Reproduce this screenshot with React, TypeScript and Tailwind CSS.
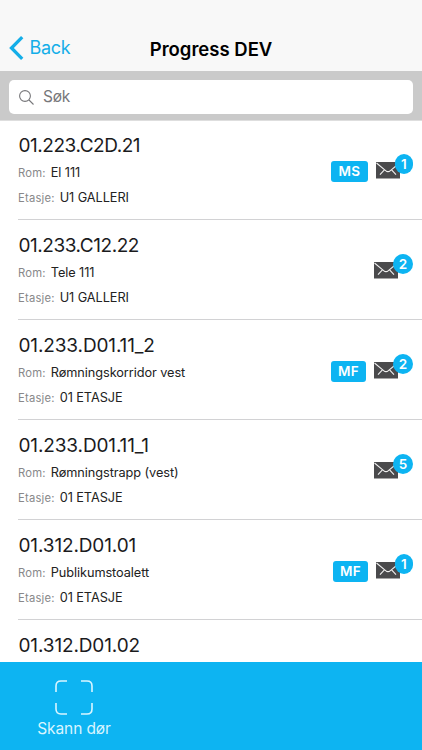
import { ChangeEvent, useState } from "react";

type Door = {
    id: string;
    room: string;
    floor: string;
    tag?: string;
    messages?: number;
};

const doors: Door[] = [
    { id: "01.223.C2D.21", room: "El 111", floor: "U1 GALLERI", tag: "MS", messages: 1 },
    { id: "01.233.C12.22", room: "Tele 111", floor: "U1 GALLERI", messages: 2 },
    { id: "01.233.D01.11_2", room: "Rømningskorridor vest", floor: "01 ETASJE", tag: "MF", messages: 2 },
    { id: "01.233.D01.11_1", room: "Rømningstrapp (vest)", floor: "01 ETASJE", messages: 5 },
    { id: "01.312.D01.01", room: "Publikumstoalett", floor: "01 ETASJE", tag: "MF", messages: 1 },
    { id: "01.312.D01.02", room: "", floor: "" },
];

function MessageIcon({ count }: { count: number }) {
    return (
        <div className={count === 1 ? "relative h-[18px] w-[37px]" : "relative h-[18px] w-[39px]"}>
            <svg width="24" height="17" viewBox="0 0 24 17" fill="none">
                <rect width="24" height="16.5" fill="#4a4a4c" />
                <path
                    d="M0.5 1 L9.6 8.6 Q12 10.8 14.4 8.6 L23.5 1 M8.4 7.8 L4 12.6 M15.6 7.8 L20 12.6"
                    stroke="#f0f0f0"
                    strokeWidth="1.1"
                />
            </svg>
            <span
                className={`absolute right-0 -top-[8px] flex h-[19.5px] items-center justify-center rounded-full bg-[#0db4f2] text-[13.5px] font-semibold text-white ${
                    count === 1 ? "w-[18.5px]" : "w-[20px]"
                }`}
            >
                {count}
            </span>
        </div>
    );
}

function Field({ label, value }: { label: string; value: string }) {
    return (
        <p className="flex h-[25px] items-center gap-[5px] text-[12.75px] tracking-[-0.08px] text-[#222]">
            <span className="pt-px text-[11.25px] tracking-[0.2px] text-[#88888a]">{label}:</span>
            {value}
        </p>
    );
}

function DoorRow({ door }: { door: Door }) {
    return (
        <li className="ml-[18px] flex h-[100px] shrink-0 border-b border-[#d2d2d4] pr-[9px]">
            <div className="flex-1 pt-3">
                <h2
                    className={`h-7 pl-[0.5px] text-[19px] leading-[27px] text-[#1b1b1d] ${
                        door.id.includes(".C") ? "tracking-[-0.45px]" : "tracking-[-0.13px]"
                    }`}
                >
                    {door.id}
                </h2>
                {door.room && (
                    <>
                        <Field label="Rom" value={door.room} />
                        <Field label="Etasje" value={door.floor} />
                    </>
                )}
            </div>
            <div className="flex items-center gap-2 pt-[3px]">
                {door.tag && (
                    <span
                        className={`flex h-[21px] items-center justify-center rounded-[3px] bg-[#0db4f2] pt-px text-[13.5px] font-semibold tracking-[0.4px] text-white ${
                            door.tag === "MS" ? "w-[37px]" : "w-[35px]"
                        }`}
                    >
                        {door.tag}
                    </span>
                )}
                {door.messages && <MessageIcon count={door.messages} />}
            </div>
        </li>
    );
}

export default function App() {
    const [query, setQuery] = useState<string>("");

    const handleSearch = (e: ChangeEvent<HTMLInputElement>) => setQuery(e.target.value);
    const visible = doors.filter((d) => d.id.toLowerCase().includes(query.toLowerCase()));

    return (
        <div className="flex h-[750px] w-[422px] flex-col overflow-hidden bg-white font-['Inter',sans-serif]">
            <header className="grid h-[71px] shrink-0 grid-cols-[1fr_auto_1fr] items-center bg-[#f8f8f8] pt-[24px]">
                <button type="button" className="flex items-center gap-[5.5px] pl-[9px] text-[18px] tracking-[-0.3px] text-[#14aee8]">
                    <svg width="15" height="24" viewBox="0 0 15 24" fill="none">
                        <path d="M13.2 1.2 L2.5 12 L13.2 22.8" stroke="currentColor" strokeWidth="3.3" />
                    </svg>
                    Back
                </button>
                <h1 className="pt-[5px] text-[18.5px] font-semibold text-black">Progress DEV</h1>
            </header>
            <div className="h-[50px] shrink-0 border-b border-[#dedede] bg-[#cacaca] px-[9px] pt-[9px]">
                <label className="flex h-[34px] items-center gap-[9px] rounded-[5px] bg-white pl-[10px]">
                    <svg width="15" height="15" viewBox="0 0 15 15" fill="none" stroke="#77777a" strokeWidth="1.1">
                        <circle cx="6" cy="6" r="5.4" />
                        <path d="M10 10 L14.5 14.5" />
                    </svg>
                    <input
                        value={query}
                        onChange={handleSearch}
                        placeholder="Søk"
                        className="flex-1 text-[15.5px] tracking-[-0.3px] text-black outline-none placeholder:text-[#77777a]"
                    />
                </label>
            </div>
            <ul className="-mt-px flex min-h-0 flex-1 flex-col overflow-hidden">
                {visible.map((door) => (
                    <DoorRow key={door.id} door={door} />
                ))}
            </ul>
            <footer className="h-[88px] shrink-0 bg-[#0db4f2]">
                <button type="button" className="flex w-[148px] flex-col items-center pt-[18px] text-[15.5px] text-white">
                    <svg width="38" height="35" viewBox="0 0 38 35" fill="none" stroke="#d9f5ff" strokeWidth="1.6">
                        <path d="M1 12 V6 Q1 1 6 1 H12 M26 1 H32 Q37 1 37 6 V12 M37 23 V29 Q37 34 32 34 H26 M12 34 H6 Q1 34 1 29 V23" />
                    </svg>
                    <span className="mt-[2px] leading-6 tracking-[-0.1px] text-[#d9f5ff]">Skann dør</span>
                </button>
            </footer>
        </div>
    );
}
